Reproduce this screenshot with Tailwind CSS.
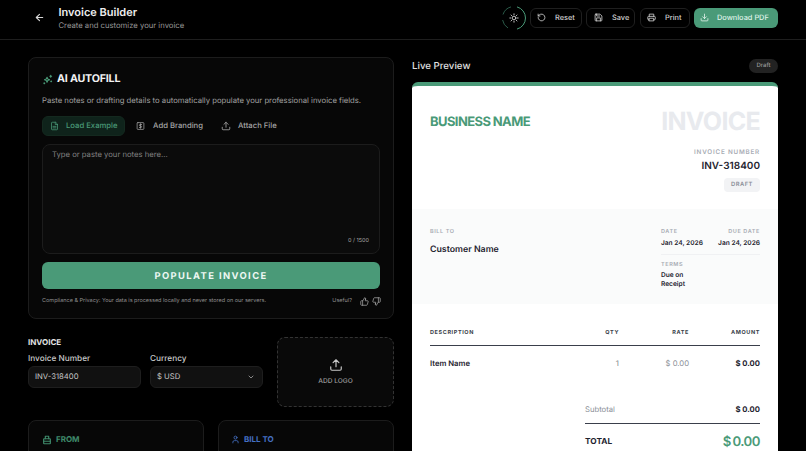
<!DOCTYPE html>
<html><head><meta charset="utf-8"><script src="https://cdn.jsdelivr.net/npm/@tailwindcss/browser@4"></script></head>
<body class="bg-black">
<div class="w-[806px] h-[451px] overflow-hidden bg-black text-white font-['Inter',sans-serif] [text-rendering:geometricPrecision] antialiased flex flex-col">
<header class="h-10 shrink-0 border-b border-[#1e1e1e] flex items-center pl-[34px] pr-[28px] pb-[4px]">
  <svg class="w-[11px] h-[11px] text-[#d8d8d8]" viewBox="0 0 24 24" fill="none" stroke="currentColor" stroke-width="2.4" stroke-linecap="round" stroke-linejoin="round"><path d="M19 12H5M12 19l-7-7 7-7"/></svg>
  <div class="ml-[13.5px] flex flex-col">
    <div class="text-[11px] leading-[14px] font-semibold text-[#eeeeee]">Invoice Builder</div>
    <div class="text-[7.7px] leading-[11px] mt-[1px] text-[#979797]">Create and customize your invoice</div>
  </div>
  <div class="ml-auto flex items-center">
    <div class="relative w-6 h-6 rounded-full flex items-center justify-center mr-[4px]">
      <svg class="absolute inset-0" viewBox="0 0 24 24" fill="none"><path d="M15 0.900A11.500 11.500 0 0 1 15 23.100" stroke="#4a9a78" stroke-width="1"/><path d="M9 0.900A11.500 11.500 0 0 0 1 8.500M0.600 14A11.500 11.500 0 0 0 6 22" stroke="#35705a" stroke-width="0.800"/></svg>
      <svg class="w-[10px] h-[10px] text-[#d8d8d8]" viewBox="0 0 24 24" fill="none" stroke="currentColor" stroke-width="2.200" stroke-linecap="round"><circle cx="12" cy="12" r="4.500"/><path d="M12 2v2M12 20v2M4.900 4.900l1.400 1.400M17.700 17.700l1.400 1.400M2 12h2M20 12h2M4.900 19.100l1.400-1.400M17.700 6.300l1.400-1.400"/></svg>
    </div>
    <div class="h-5 w-[52px] rounded-md border border-[#1f1f1f] flex items-center pl-[6px] text-[7.400px] font-medium text-[#d0d0d0] mr-[4px]">
      <svg class="w-[9px] h-[9px] mr-[9px]" viewBox="0 0 24 24" fill="none" stroke="currentColor" stroke-width="2.200" stroke-linecap="round" stroke-linejoin="round"><path d="M3 12a9 9 0 1 0 3-6.700L3 8"/><path d="M3 3v5h5"/></svg>Reset</div>
    <div class="h-5 w-[49px] rounded-md border border-[#1f1f1f] flex items-center pl-[7px] text-[7.400px] font-medium text-[#d0d0d0] mr-[5px]">
      <svg class="w-[9px] h-[9px] mr-[9px]" viewBox="0 0 24 24" fill="none" stroke="currentColor" stroke-width="2.200" stroke-linecap="round" stroke-linejoin="round"><path d="M5 3h11l5 5v11a2 2 0 0 1-2 2H5a2 2 0 0 1-2-2V5a2 2 0 0 1 2-2z"/><path d="M17 21v-8H7v8M7 3v5h8"/></svg>Save</div>
    <div class="h-5 w-[50px] rounded-md border border-[#1f1f1f] flex items-center pl-[6px] text-[7.400px] font-medium text-[#d0d0d0] mr-[4px]">
      <svg class="w-[9px] h-[9px] mr-[9px]" viewBox="0 0 24 24" fill="none" stroke="currentColor" stroke-width="2.200" stroke-linecap="round" stroke-linejoin="round"><path d="M6 9V3h12v6M6 18H4a2 2 0 0 1-2-2v-5a2 2 0 0 1 2-2h16a2 2 0 0 1 2 2v5a2 2 0 0 1-2 2h-2"/><path d="M6 14h12v7H6z"/></svg>Print</div>
    <div class="h-5 w-[84px] rounded-md bg-[#4a9a78] flex items-center pl-[6px] text-[7.400px] font-medium text-[#dff2e9]">
      <svg class="w-[9px] h-[9px] mr-[8px]" viewBox="0 0 24 24" fill="none" stroke="currentColor" stroke-width="2.200" stroke-linecap="round" stroke-linejoin="round"><path d="M21 15v4a2 2 0 0 1-2 2H5a2 2 0 0 1-2-2v-4M7 10l5 5 5-5M12 15V3"/></svg>Download PDF</div>
  </div>
</header>
<main class="flex-1 min-h-0 flex gap-[18px] px-[28px] pt-[17px] overflow-hidden">
  <section class="w-[366px] shrink-0 flex flex-col">
    <div class="h-[262px] shrink-0 rounded-lg border border-[#1c1c1c] bg-[#070707] px-[13px] flex flex-col">
      <div class="flex items-center gap-[4px] mt-[14px] h-[14px]">
        <svg class="w-[11px] h-[11px] text-[#4a9a78]" viewBox="0 0 24 24" fill="none" stroke="currentColor" stroke-width="2.400" stroke-linecap="round" stroke-linejoin="round"><path d="M11 7l1.600 3.900L16.500 12.500l-3.900 1.600L11 18l-1.600-3.900L5.500 12.500l3.900-1.600z"/><path d="M19 3v4M17 5h4M20 15v2M19 16h2M4 20h2M5 19v2"/></svg>
        <span class="text-[10.700px] leading-[14px] font-bold text-[#f2f2f2] tracking-[-0.2px]">AI AUTOFILL</span>
      </div>
      <p class="mt-[9px] text-[7.700px] leading-[11px] text-[#a0a0a0] whitespace-nowrap">Paste notes or drafting details to automatically populate your professional invoice fields.</p>
      <div class="flex items-center mt-[10px] text-[7.700px] font-medium h-5">
        <div class="h-5 w-[83px] rounded-md bg-[#0f231b] border border-[#14291f] text-[#4a9a78] flex items-center pl-[7px]">
          <svg class="w-[9px] h-[10px] mr-[7px]" viewBox="0 0 24 24" fill="none" stroke="currentColor" stroke-width="2" stroke-linecap="round" stroke-linejoin="round"><path d="M14 2H6a2 2 0 0 0-2 2v16a2 2 0 0 0 2 2h12a2 2 0 0 0 2-2V8z"/><path d="M14 2v6h6M8 13h8M8 17h8"/></svg>Load Example</div>
        <div class="flex items-center text-[#a6a6a6] ml-[11px]">
          <svg class="w-[9px] h-[10px] mr-[8px]" viewBox="0 0 24 24" fill="none" stroke="currentColor" stroke-width="2" stroke-linecap="round" stroke-linejoin="round"><rect x="3" y="3" width="18" height="18" rx="2"/><path d="M15 8h-4a2 2 0 0 0 0 4h2a2 2 0 0 1 0 4H9M12 6v12"/></svg>Add Branding</div>
        <div class="flex items-center text-[#a6a6a6] ml-[18px]">
          <svg class="w-[10px] h-[10px] mr-[7px]" viewBox="0 0 24 24" fill="none" stroke="currentColor" stroke-width="2" stroke-linecap="round" stroke-linejoin="round"><path d="M21 15v4a2 2 0 0 1-2 2H5a2 2 0 0 1-2-2v-4M17 8l-5-5-5 5M12 3v12"/></svg>Attach File</div>
      </div>
      <div class="relative mt-[8px] h-[110px] rounded-lg border border-[#1c1c1c] bg-[#0b0b0b] px-[9px] py-[4px] text-[7.700px] leading-[11px] text-[#808080]">Type or paste your notes here...
        <span class="absolute right-[10px] bottom-[8px] text-[5.500px] leading-[8px] text-[#a8a8a8]">0 / 1500</span>
      </div>
      <div class="mt-[8px] h-[27px] pt-[3px] rounded-md bg-[#4a9a78] flex items-center justify-center text-[9.400px] font-bold tracking-[1.400px] text-[#eef8f3]">POPULATE INVOICE</div>
      <div class="flex items-center mt-[7px] h-[11px] text-[5.500px] text-[#909090]">
        <span>Compliance &amp; Privacy: Your data is processed locally and never stored on our servers.</span>
        <span class="ml-auto">Useful?</span>
        <svg class="w-[9px] h-[9px] ml-[8px] text-[#a6a6a6]" viewBox="0 0 24 24" fill="none" stroke="currentColor" stroke-width="2" stroke-linecap="round" stroke-linejoin="round"><path d="M7 10v12M15 5.900L14 10h5.800a2 2 0 0 1 1.900 2.600l-2.300 8A2 2 0 0 1 17.500 22H4a2 2 0 0 1-2-2v-8a2 2 0 0 1 2-2h2.800a2 2 0 0 0 1.800-1.100L12 2a3 3 0 0 1 3 3.900z"/></svg>
        <svg class="w-[9px] h-[9px] ml-[3px] mr-[-1px] text-[#a6a6a6]" viewBox="0 0 24 24" fill="none" stroke="currentColor" stroke-width="2" stroke-linecap="round" stroke-linejoin="round"><path d="M17 14V2M9 18.100L10 14H4.200a2 2 0 0 1-1.900-2.600l2.300-8A2 2 0 0 1 6.500 2H20a2 2 0 0 1 2 2v8a2 2 0 0 1-2 2h-2.800a2 2 0 0 0-1.800 1.100L12 22a3 3 0 0 1-3-3.900z"/></svg>
      </div>
    </div>
    <div class="flex mt-[18px] h-[69px] shrink-0">
      <div class="w-[235px] shrink-0">
        <div class="text-[8px] leading-[11px] font-bold text-[#e2e2e2]">INVOICE</div>
        <div class="flex gap-[9px] mt-[5px]">
          <div class="w-[113px]">
            <div class="text-[8.250px] leading-[11px] font-medium text-[#c8c8c8]">Invoice Number</div>
            <div class="mt-[2px] h-[22px] rounded-md border border-[#1e1e1e] bg-[#111111] flex items-center px-[6px] text-[7.700px] text-[#c8c8c8]">INV-318400</div>
          </div>
          <div class="w-[113px]">
            <div class="text-[8.250px] leading-[11px] font-medium text-[#c8c8c8]">Currency</div>
            <div class="mt-[2px] h-[22px] rounded-md border border-[#1e1e1e] bg-[#111111] flex items-center px-[6px] text-[7.700px] text-[#c8c8c8]">$ USD
              <svg class="w-[8px] h-[8px] ml-auto mr-[1px] text-[#a0a0a0]" viewBox="0 0 24 24" fill="none" stroke="currentColor" stroke-width="2.500" stroke-linecap="round" stroke-linejoin="round"><path d="M6 9l6 6 6-6"/></svg>
            </div>
          </div>
        </div>
      </div>
      <div class="ml-[14px] w-[117px] h-[70px] rounded-lg border border-dashed border-[#333333] bg-[#090909] flex flex-col items-center justify-center">
        <svg class="w-[14px] h-[14px] text-[#c8c8c8] mt-[-1px]" viewBox="0 0 24 24" fill="none" stroke="currentColor" stroke-width="2" stroke-linecap="round" stroke-linejoin="round"><path d="M21 15v4a2 2 0 0 1-2 2H5a2 2 0 0 1-2-2v-4M17 8l-5-5-5 5M12 3v12"/></svg>
        <div class="mt-[5px] text-[6.600px] leading-[8px] font-medium text-[#9c9c9c]">ADD LOGO</div>
      </div>
    </div>
    <div class="flex gap-[14px] mt-[14px]">
      <div class="w-[176px] h-[120px] rounded-lg border border-[#1c1c1c] bg-[#070707] pl-[13px] pt-[13px]">
        <div class="flex items-center gap-[4px] text-[8px] leading-[11px] font-bold text-[#3f8a6b]">
          <svg class="w-[10px] h-[10px]" viewBox="0 0 24 24" fill="none" stroke="currentColor" stroke-width="2.800" stroke-linecap="round" stroke-linejoin="round"><rect x="4" y="9" width="16" height="12" rx="1"/><path d="M8 9V3h8v6M4 15h16"/></svg>FROM</div>
      </div>
      <div class="w-[176px] h-[120px] rounded-lg border border-[#1c1c1c] bg-[#070707] pl-[13px] pt-[13px]">
        <div class="flex items-center gap-[4px] text-[8px] leading-[11px] font-bold text-[#4470c4]">
          <svg class="w-[9px] h-[9px] ml-[-1px]" viewBox="0 0 24 24" fill="none" stroke="currentColor" stroke-width="2.200" stroke-linecap="round" stroke-linejoin="round"><path d="M19 21v-2a4 4 0 0 0-4-4H9a4 4 0 0 0-4 4v2"/><circle cx="12" cy="7" r="4"/></svg>BILL TO</div>
      </div>
    </div>
  </section>
  <section class="w-[366px] shrink-0 flex flex-col">
    <div class="h-[25px] shrink-0 flex items-center justify-between pb-[8px]">
      <span class="mt-[3px] text-[9.700px] font-medium text-[#e2e2e2]">Live Preview</span>
      <span class="w-[29px] h-[14px] rounded-full bg-[#222222] flex items-center justify-center text-[6px] font-medium text-[#999999]">Draft</span>
    </div>
    <div class="rounded-t-md bg-white border-t-[4px] border-[#4a9a78] text-[#1f2430] flex-1">
      <div class="h-[123px] px-[18px] flex justify-between">
        <div class="mt-[27px] text-[13px] leading-[18px] font-bold text-[#4a9a78] tracking-[-0.6px]">BUSINESS NAME</div>
        <div class="flex flex-col items-end">
          <div class="mt-[21px] text-[25px] leading-[30px] font-bold text-[#e8eaee] tracking-[-0.7px]">INVOICE</div>
          <div class="mt-[11px] text-[6.300px] leading-[8px] font-semibold tracking-[0.8px] text-[#a8acb4]">INVOICE NUMBER</div>
          <div class="mt-[3px] text-[10px] leading-[14px] font-semibold text-[#1f2430]">INV-318400</div>
          <div class="mt-[5px] w-[36px] h-[14px] rounded-sm bg-[#f2f3f5] flex items-center justify-center text-[5.800px] font-semibold tracking-[0.5px] text-[#8b8f98]">DRAFT</div>
        </div>
      </div>
      <div class="h-[95px] bg-[#fafbfb] px-[18px] pt-[19px] flex justify-between">
        <div>
          <div class="text-[5.500px] leading-[8px] font-semibold tracking-[0.6px] text-[#a8acb4]">BILL TO</div>
          <div class="mt-[8px] text-[8.800px] leading-[12px] font-semibold">Customer Name</div>
        </div>
        <div class="w-[99px]">
          <div class="flex justify-between">
            <div><div class="text-[5.500px] leading-[8px] font-semibold tracking-[0.6px] text-[#a8acb4]">DATE</div><div class="mt-[2px] text-[6.600px] leading-[10px] font-semibold">Jan 24, 2026</div></div>
            <div class="text-right"><div class="text-[5.500px] leading-[8px] font-semibold tracking-[0.6px] text-[#a8acb4]">DUE DATE</div><div class="mt-[2px] text-[6.600px] leading-[10px] font-semibold">Jan 24, 2026</div></div>
          </div>
          <div class="mt-[6px] border-t border-[#f0f1f3] pt-[6px]">
            <div class="text-[5.500px] leading-[8px] font-semibold tracking-[0.6px] text-[#a8acb4]">TERMS</div>
            <div class="mt-[2px] text-[6.600px] leading-[9px] font-semibold w-[40px]">Due on Receipt</div>
          </div>
        </div>
      </div>
      <div class="px-[18px] pt-[24px]">
        <div class="flex items-center h-[10px] text-[5.500px] font-bold tracking-[0.6px] text-[#3a3f4b]">
          <span class="flex-1">DESCRIPTION</span><span class="w-[20px] text-right">QTY</span><span class="w-[70px] text-right">RATE</span><span class="w-[71px] text-right">AMOUNT</span>
        </div>
        <div class="mt-[7px] border-t-[1.500px] border-[#3a3f4b]"></div>
        <div class="mt-[12px] flex items-center h-[12px] text-[7.700px]">
          <span class="flex-1 font-semibold">Item Name</span><span class="w-[20px] text-right text-[#7b7f88]">1</span><span class="w-[70px] text-right text-[#8b8f98]">$ 0.00</span><span class="w-[71px] text-right font-bold">$ 0.00</span>
        </div>
        <div class="ml-[155px]">
          <div class="mt-[34px] flex justify-between items-center h-[12px] text-[7.700px]"><span class="text-[#8b8f98]">Subtotal</span><span class="font-bold">$ 0.00</span></div>
          <div class="mt-[7px] border-t-[1.500px] border-[#3a3f4b]"></div>
          <div class="mt-[7px] flex justify-between items-center h-[22px]"><span class="text-[8.300px] font-bold">TOTAL</span><span class="mt-[1px] text-[13.200px] font-semibold text-[#4a9a78] [word-spacing:-1.200px] tracking-[-0.5px]">$ 0.00</span></div>
        </div>
      </div>
    </div>
  </section>
</main>
</div>
</body></html>
